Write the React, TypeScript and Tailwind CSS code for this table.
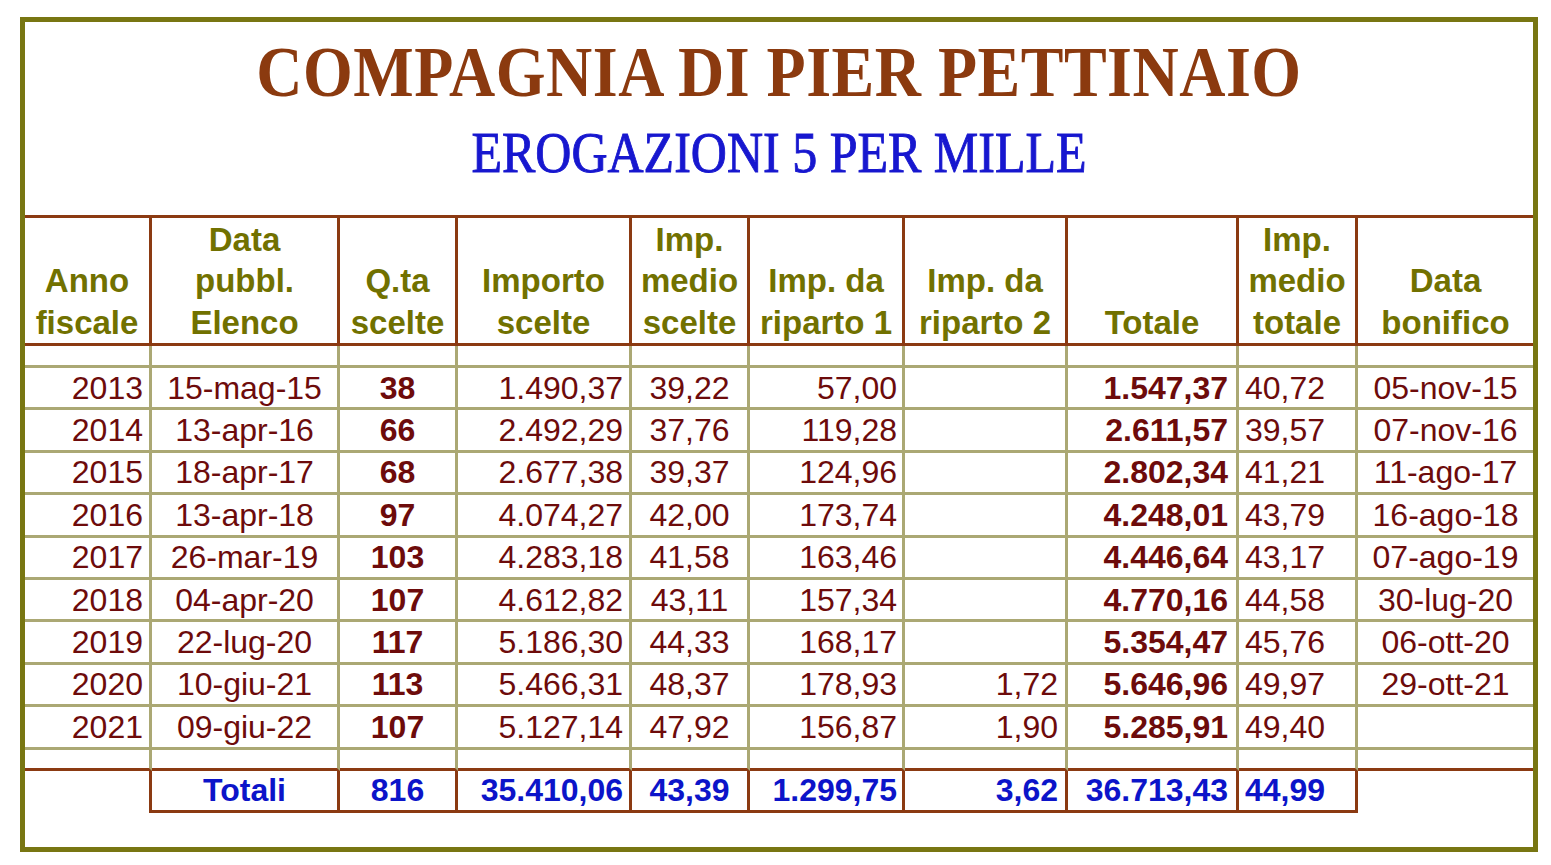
const rows = [
  ['2013', '15-mag-15', '38', '1.490,37', '39,22', '57,00', '', '1.547,37', '40,72', '05-nov-15'],
  ['2014', '13-apr-16', '66', '2.492,29', '37,76', '119,28', '', '2.611,57', '39,57', '07-nov-16'],
  ['2015', '18-apr-17', '68', '2.677,38', '39,37', '124,96', '', '2.802,34', '41,21', '11-ago-17'],
  ['2016', '13-apr-18', '97', '4.074,27', '42,00', '173,74', '', '4.248,01', '43,79', '16-ago-18'],
  ['2017', '26-mar-19', '103', '4.283,18', '41,58', '163,46', '', '4.446,64', '43,17', '07-ago-19'],
  ['2018', '04-apr-20', '107', '4.612,82', '43,11', '157,34', '', '4.770,16', '44,58', '30-lug-20'],
  ['2019', '22-lug-20', '117', '5.186,30', '44,33', '168,17', '', '5.354,47', '45,76', '06-ott-20'],
  ['2020', '10-giu-21', '113', '5.466,31', '48,37', '178,93', '1,72', '5.646,96', '49,97', '29-ott-21'],
  ['2021', '09-giu-22', '107', '5.127,14', '47,92', '156,87', '1,90', '5.285,91', '49,40', ''],
]

const totals = ['', 'Totali', '816', '35.410,06', '43,39', '1.299,75', '3,62', '36.713,43', '44,99', '']

const headers = [
  ['Anno', 'fiscale'],
  ['Data', 'pubbl.', 'Elenco'],
  ['Q.ta', 'scelte'],
  ['Importo', 'scelte'],
  ['Imp.', 'medio', 'scelte'],
  ['Imp. da', 'riparto 1'],
  ['Imp. da', 'riparto 2'],
  ['Totale'],
  ['Imp.', 'medio', 'totale'],
  ['Data', 'bonifico'],
]

// per column alignment of the numbers
const align = [
  'justify-end pr-[6px]',
  'justify-center',
  'justify-center',
  'justify-end pr-[6px]',
  'justify-center',
  'justify-end pr-[5px]',
  'justify-end pr-[7px]',
  'justify-end pr-[8px]',
  'justify-start pl-[6px]',
  'justify-center',
]

const bold = [false, false, true, false, false, false, false, true, false, false]

export default function App() {
  return (
    <div className="min-h-screen bg-white pt-[17px] pl-[20px] font-['Liberation_Sans',Arial,sans-serif]">
      <div className="w-[1518px] h-[835px] border-[5px] border-[#787612] bg-white">
        {/* Titles */}
        <div className="h-[193px] flex flex-col items-center">
          <div className="h-[100px] flex items-center">
            <h1 className="font-['Liberation_Serif',serif] font-bold text-[64px] leading-none text-[#8b3a0f] scale-y-[1.12] tracking-[0.5px]">
              COMPAGNIA DI PIER PETTINAIO
            </h1>
          </div>
          <div className="h-[62px] flex items-center">
            <h2 className="font-['Liberation_Serif',serif] text-[50px] leading-none text-[#1717cf] scale-y-[1.12] [-webkit-text-stroke:0.8px_#1717cf]">
              EROGAZIONI 5 PER MILLE
            </h2>
          </div>
        </div>

        {/* Table */}
        <div className="grid grid-cols-[127px_188px_118px_174px_118px_155px_163px_171px_119px_175px] border-t-[3px] border-[#8b3a12]">
          {headers.map((lines, i) => (
            <div
              key={'h' + i}
              className={
                'h-[128px] flex flex-col justify-end items-center text-center font-bold text-[33px] leading-[41.5px] text-[#717100] border-b-[3px] border-[#8b3a12] ' +
                (i < 9 ? 'border-r-[3px]' : '')
              }
            >
              {lines.map((l) => (
                <span key={l}>{l}</span>
              ))}
            </div>
          ))}

          {headers.map((_, i) => (
            <div
              key={'e1' + i}
              className={'h-[22px] border-b-[3px] border-[#aba874] ' + (i < 9 ? 'border-r-[3px]' : '')}
            />
          ))}

          {rows.map((r, ri) =>
            r.map((v, i) => (
              <div
                key={ri + '-' + i}
                className={
                  'h-[42.4px] flex items-center text-[32px] leading-none text-[#6d0b0b] border-b-[3px] border-[#aba874] ' +
                  align[i] +
                  (bold[i] ? ' font-bold' : '') +
                  (i < 9 ? ' border-r-[3px]' : '')
                }
              >
                {v}
              </div>
            ))
          )}

          {headers.map((_, i) => (
            <div
              key={'e2' + i}
              className={
                'h-[21px] border-b-[3px] border-r-[#aba874] border-b-[#8b3a12] ' + (i < 9 ? 'border-r-[3px]' : '')
              }
            />
          ))}

          {totals.map((v, i) => (
            <div
              key={'t' + i}
              className={
                'h-[42px] flex items-center font-bold text-[32px] leading-none text-[#0c14c9] border-[#8b3a12] ' +
                align[i] +
                (i === 0 ? ' border-r-[3px]' : '') +
                (i > 0 && i < 9 ? ' border-r-[3px] border-b-[3px]' : '')
              }
            >
              {v}
            </div>
          ))}
        </div>
      </div>
    </div>
  )
}
